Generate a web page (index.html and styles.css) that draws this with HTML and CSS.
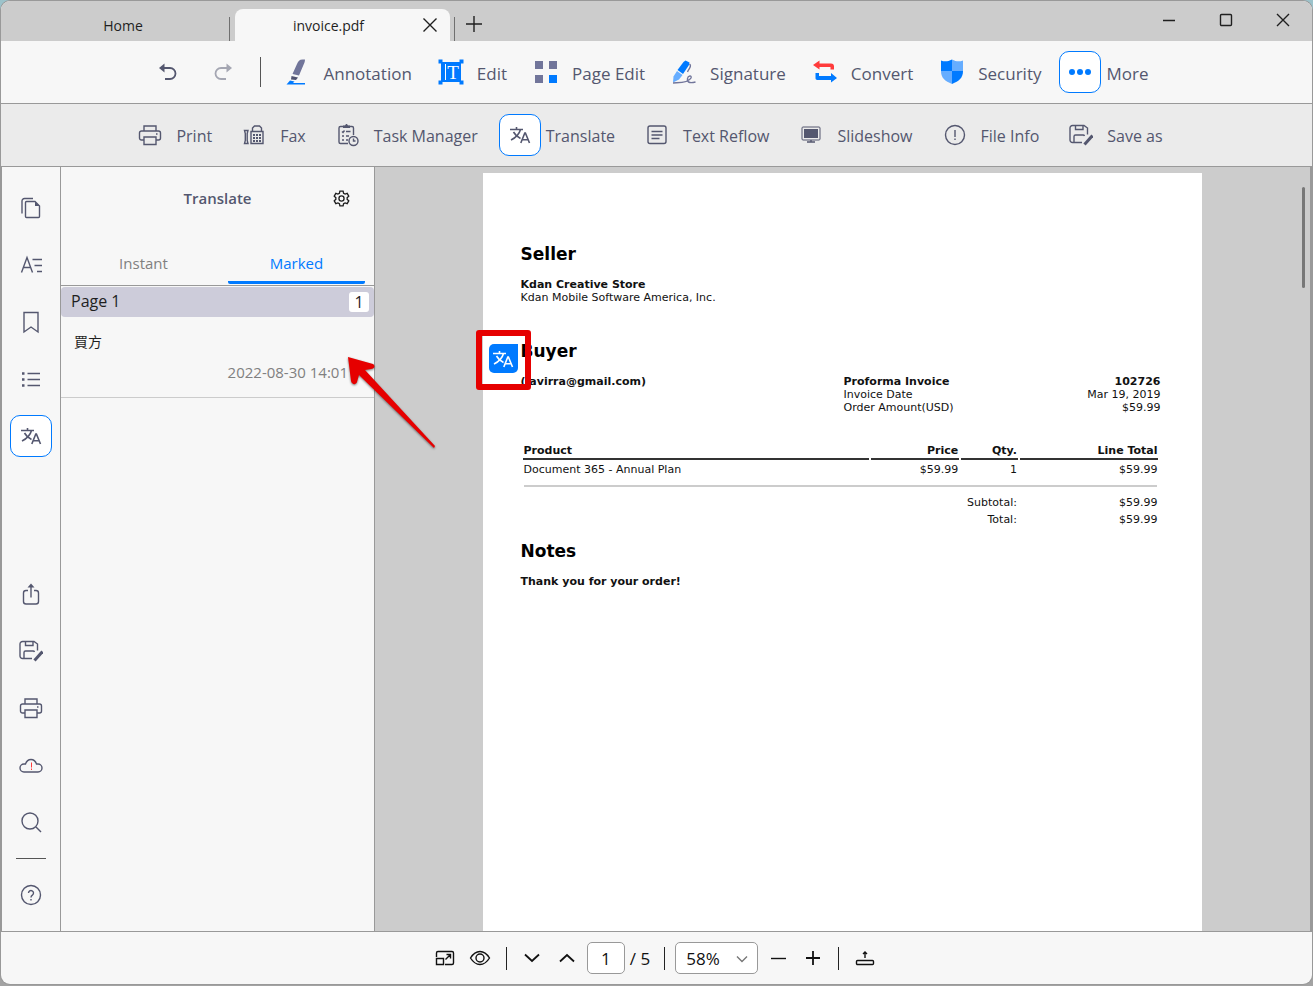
FILE: index.html
```html
<!DOCTYPE html>
<html lang="en">
<head>
    <meta charset="UTF-8">
    <meta name="viewport" content="width=device-width, initial-scale=1.0">
    <title>invoice.pdf</title>
    <link rel="stylesheet" href="styles.css">
</head>
<body>
    <!-- shared icons -->
    <svg class="icon-defs" aria-hidden="true">
        <symbol id="icon-translate" viewBox="0 0 24 24">
            <path stroke-width="1.600" d="M2 6.500h13M8.500 4v2.500M12.500 6.500c-1.200 4.500-4.500 8-9.500 10.500M5.500 9c1.500 2.800 4 5 7 6.500"/>
            <path stroke-width="1.600" d="M12.800 20l4-10h.6L21.500 20M14.200 16.800h6"/>
        </symbol>
        <symbol id="icon-print" viewBox="0 0 24 24">
            <path d="M6 8V3h12v5M6 17H3.500a2 2 0 0 1-2-2v-5a2 2 0 0 1 2-2h17a2 2 0 0 1 2 2v5a2 2 0 0 1-2 2H18M6 14h12v7.500H6zM18 11h1.500"/>
        </symbol>
        <symbol id="icon-save" viewBox="0 0 24 24">
            <path d="M13 19.500H3.500a2.500 2.500 0 0 1-2.500-2.500V5a2.500 2.500 0 0 1 2.500-2.500h11.500L18.500 5v6.500M6.500 2.500v4h7.500v-4M5 19.500v-6a1.500 1.500 0 0 1 1.500-1.500h7.500a1.500 1.500 0 0 1 1.500 1"/>
            <path d="M15.500 21.500l8-9" stroke-width="3"/>
        </symbol>
    </svg>

    <div class="window">
        <header class="tab-bar">
            <button class="doc-tab">Home</button>
            <span class="tab-separator"></span>
            <div class="doc-tab active">
                <button class="tab-name">invoice.pdf</button>
                <button class="tab-close" aria-label="Close tab">
                    <svg width="16" height="16" viewBox="0 0 16 16"><path d="M1.500 1.500l13 13M14.500 1.500l-13 13"/></svg>
                </button>
            </div>
            <span class="tab-separator"></span>
            <button class="tab-add" aria-label="New tab">
                <svg width="18" height="18" viewBox="0 0 18 18"><path d="M9 1v16M1 9h16"/></svg>
            </button>
            <div class="window-controls">
                <button class="window-button" aria-label="Minimize">
                    <svg width="14" height="14" viewBox="0 0 14 14"><path d="M1 7.500h12"/></svg>
                </button>
                <button class="window-button" aria-label="Maximize">
                    <svg width="14" height="14" viewBox="0 0 14 14"><rect x="1.500" y="1.500" width="11" height="11" rx="1"/></svg>
                </button>
                <button class="window-button" aria-label="Close">
                    <svg width="14" height="14" viewBox="0 0 14 14"><path d="M1 1l12 12M13 1L1 13"/></svg>
                </button>
            </div>
        </header>

        <nav class="toolbar">
            <button class="icon-button" aria-label="Undo">
                <svg class="icon" viewBox="0 0 24 24"><path d="M7 8h8a5 5 0 0 1 0 11H10" stroke-width="1.800"/><path class="solid" d="M9.500 3.500L4 8l5.500 4.500z"/></svg>
            </button>
            <button class="icon-button" aria-label="Redo" disabled>
                <svg class="icon" viewBox="0 0 24 24"><path d="M17 8H9a5 5 0 0 0 0 11h5" stroke-width="1.800"/><path class="solid" d="M14.500 3.500L20 8l-5.500 4.500z"/></svg>
            </button>
            <span class="toolbar-divider"></span>
            <button class="tool">
                <span class="tool-icon">
                    <svg class="icon-lg" viewBox="0 0 26 26"><path fill="#71759a" d="M21 0.500h-2.500c-3 0-4.500 2-5.500 4.500L8.500 15l6.500 1.500L20.500 3.500c.3-1 .5-2 .5-3z"/><path fill="#4f5270" d="M7.500 17l6.500 1.500-2 2.500-5-.5z"/><path fill="#007aff" d="M6 21.500l4.500 1L9 24h12v1.500H2.500z"/></svg>
                </span>
                <span class="tool-label">Annotation</span>
            </button>
            <button class="tool">
                <span class="tool-icon">
                    <svg class="icon-lg" viewBox="0 0 26 26"><g fill="#007aff"><path d="M3 3h20v20H3z"/><path d="M.5.5h4v4h-4zM21.500.5h4v4h-4zM.5 21.500h4v4h-4zM21.500 21.500h4v4h-4z"/></g><path fill="#fff" d="M7 5h1v16H7z"/><text class="edit-letter" x="15" y="20" text-anchor="middle">T</text></svg>
                </span>
                <span class="tool-label">Edit</span>
            </button>
            <button class="tool">
                <span class="tool-icon">
                    <svg class="icon-lg" viewBox="0 0 26 26"><path fill="#71759a" d="M2 2h8v8H2zM16 2h8v8h-8zM2 16h8v8H2z"/><path fill="#007aff" d="M16 16h8v8h-8z"/></svg>
                </span>
                <span class="tool-label">Page Edit</span>
            </button>
            <button class="tool">
                <span class="tool-icon">
                    <svg class="icon-lg" viewBox="0 0 26 26"><path fill="#007aff" d="M12.500 3l2-1.500 4 2-.5 2.500-6 9-5.500-4z"/><path fill="#66adff" d="M6 12l5.500 4-3.500 4.500-6 3 .5-6z"/><path fill="none" stroke="#71759a" stroke-width="1.400" d="M18.500 5c3 2-1 5-2 8M2 24c5-.5 15 .5 18-5 1-3-3-2.500-3.500.5-.5 5 4 4.500 8 3.500"/></svg>
                </span>
                <span class="tool-label">Signature</span>
            </button>
            <button class="tool">
                <span class="tool-icon">
                    <svg class="icon-lg" viewBox="0 0 26 26"><path fill="#ff3b3b" d="M7.500 1.500v3H19c2 0 3 1 3 3v3h-3.500V8h-11v2.500L1 6z"/><path fill="#007aff" d="M3.500 14H7v3h12v-3l6 5-6 4.500V21H5.500c-1.500 0-2-1-2-2z"/></svg>
                </span>
                <span class="tool-label">Convert</span>
            </button>
            <button class="tool">
                <span class="tool-icon">
                    <svg class="icon-lg" viewBox="0 0 26 26"><path fill="#007aff" d="M2 1.500c4 1.500 7 1 11-1V12H2z"/><path fill="#66adff" d="M13 .5c4 2 7 2.500 11 1V12H13zM2 12h11v13C6 22 2 19 2 12z"/><path fill="#007aff" d="M13 12h11c0 7-4 10-11 13z"/></svg>
                </span>
                <span class="tool-label">Security</span>
            </button>
            <button class="tool">
                <span class="tool-icon selected">
                    <svg class="icon-lg" viewBox="0 0 26 26"><g fill="#007aff"><circle cx="5" cy="13" r="3"/><circle cx="13" cy="13" r="3"/><circle cx="21" cy="13" r="3"/></g></svg>
                </span>
                <span class="tool-label">More</span>
            </button>
        </nav>

        <nav class="toolbar sub-toolbar">
            <button class="tool">
                <span class="tool-icon"><svg class="icon" viewBox="0 0 24 24"><use href="#icon-print"/></svg></span>
                <span class="tool-label">Print</span>
            </button>
            <button class="tool">
                <span class="tool-icon">
                    <svg class="icon" viewBox="0 0 24 24"><path d="M9 20.500V8.500h12v12zM10.500 8.500V5l2-2h5l2 2v3.500M2.500 7.500h3.500l-.8 3v7l.8 3H2.500l.8-3v-7z"/><path stroke-width="2" stroke-dasharray="2 1" d="M11 12h8M11 15h8M11 18h8"/></svg>
                </span>
                <span class="tool-label">Fax</span>
            </button>
            <button class="tool">
                <span class="tool-icon">
                    <svg class="icon" viewBox="0 0 24 24"><path d="M12 20.500H4.500a1.500 1.500 0 0 1-1.500-1.500V5a1.500 1.500 0 0 1 1.500-1.500h11.500a1.500 1.500 0 0 1 1.500 1.500v7M6 8.500l1 1 1.500-2M6 13h2M6 17h2M10 8.500h4.500M10 13h3M10 17h2M17.500 15.500v2.500h2"/><circle cx="17.500" cy="18" r="4.500"/><path class="solid" d="M7 2.500h2l1-1.500h1l1 1.500h2v2.500H7z"/></svg>
                </span>
                <span class="tool-label">Task Manager</span>
            </button>
            <button class="tool">
                <span class="tool-icon selected"><svg class="icon" viewBox="0 0 24 24"><use href="#icon-translate"/></svg></span>
                <span class="tool-label">Translate</span>
            </button>
            <button class="tool">
                <span class="tool-icon">
                    <svg class="icon" viewBox="0 0 24 24"><rect x="3" y="3" width="18" height="17.500" rx="2"/><path d="M6.500 8.500h11M6.500 12h11M6.500 15.500h8"/></svg>
                </span>
                <span class="tool-label">Text Reflow</span>
            </button>
            <button class="tool">
                <span class="tool-icon">
                    <svg class="icon" viewBox="0 0 24 24"><rect x="3" y="4" width="18" height="13" rx="1" stroke-width="1"/><path class="solid" d="M5 6h14v9H5z"/><path d="M12 17v2M8 19h8"/></svg>
                </span>
                <span class="tool-label">Slideshow</span>
            </button>
            <button class="tool">
                <span class="tool-icon">
                    <svg class="icon" viewBox="0 0 24 24"><circle cx="12" cy="12" r="9.500"/><path d="M12 7v7M12 15.500v1.500"/></svg>
                </span>
                <span class="tool-label">File Info</span>
            </button>
            <button class="tool">
                <span class="tool-icon"><svg class="icon" viewBox="0 0 24 24"><use href="#icon-save"/></svg></span>
                <span class="tool-label">Save as</span>
            </button>
        </nav>

        <main class="workspace">
            <nav class="side-rail">
                <button class="rail-button" aria-label="Thumbnails">
                    <svg class="icon" viewBox="0 0 24 24"><path d="M3 17.500V5a2.500 2.500 0 0 1 2.500-2.500H14M7.500 5.500H16l4.500 4.500v10.500a1 1 0 0 1-1 1h-12a1 1 0 0 1-1-1v-14a1 1 0 0 1 1-1z"/><path class="solid" d="M16 5.500l4.500 4.500H16z"/></svg>
                </button>
                <button class="rail-button" aria-label="Outline">
                    <svg class="icon" viewBox="0 0 24 24"><path d="M2.500 19.500L8 4.500l5.500 15M4.500 14.500h7M13.500 6.500h9.500M15.500 12.500h7.500M18 18.500h5"/></svg>
                </button>
                <button class="rail-button" aria-label="Bookmarks">
                    <svg class="icon" viewBox="0 0 24 24"><path d="M5 2.500h14v19.500l-7-5-7 5z"/></svg>
                </button>
                <button class="rail-button" aria-label="List">
                    <svg class="icon" viewBox="0 0 24 24"><path d="M8.500 6.500H21M8.500 12.500H21M8.500 18.500H21"/><path stroke-width="2.500" d="M3 6.500h2.500M3 12.500h2.500M3 18.500h2.500"/></svg>
                </button>
                <button class="rail-button selected" aria-label="Translate">
                    <svg class="icon" viewBox="0 0 24 24"><use href="#icon-translate"/></svg>
                </button>
                <span class="rail-spacer"></span>
                <button class="rail-button" aria-label="Share">
                    <svg class="icon" viewBox="0 0 24 24"><path d="M9 8.500H7A2.500 2.500 0 0 0 4.500 11v8.500A2.500 2.500 0 0 0 7 22h10a2.500 2.500 0 0 0 2.500-2.500V11A2.500 2.500 0 0 0 17 8.500h-2M12 15.500V4"/><path class="solid" d="M12 1.500l3.500 4h-7z"/></svg>
                </button>
                <button class="rail-button" aria-label="Save as">
                    <svg class="icon" viewBox="0 0 24 24"><use href="#icon-save"/></svg>
                </button>
                <button class="rail-button" aria-label="Print">
                    <svg class="icon" viewBox="0 0 24 24"><use href="#icon-print"/></svg>
                </button>
                <button class="rail-button" aria-label="Cloud">
                    <svg class="icon" viewBox="0 0 24 24"><path d="M5 19a4 4 0 0 1 0-8h1.500c1-3 3-4.500 5.500-4.500s4.500 1.500 5.500 4.500H19a4 4 0 0 1 0 8z"/><path stroke="#ff3b3b" stroke-width="1" d="M12.500 9.500v5M12.500 15.500v1.500"/></svg>
                </button>
                <button class="rail-button" aria-label="Search">
                    <svg class="icon" viewBox="0 0 24 24"><circle cx="11" cy="11" r="8"/><path d="M17 17l5 5"/></svg>
                </button>
                <span class="rail-divider"></span>
                <button class="rail-button" aria-label="Help">
                    <svg class="icon" viewBox="0 0 24 24"><circle cx="12" cy="12" r="9.500"/><path d="M9.500 10a2.500 2.500 0 1 1 4 2c-1 .7-1.500 1-1.500 2.500M12 16v1.500"/></svg>
                </button>
            </nav>

            <aside class="panel">
                <div class="panel-header">
                    <h2 class="panel-title">Translate</h2>
                    <button class="panel-settings" aria-label="Settings">
                        <svg width="17" height="17" viewBox="0 0 18 18"><path d="M7.300 1.200h3.400l.5 2.200 1.600.9 2.200-.7 1.700 3-1.700 1.500v1.800l1.700 1.500-1.700 3-2.200-.7-1.600.9-.5 2.200H7.300l-.5-2.200-1.600-.9-2.200.7-1.700-3L3 9.900V8.100L1.300 6.600l1.700-3 2.200.7 1.600-.9z"/><circle cx="9" cy="9" r="2.700"/></svg>
                    </button>
                </div>
                <div class="panel-tabs">
                    <button class="panel-tab">Instant</button>
                    <button class="panel-tab active">Marked</button>
                </div>
                <div class="page-group">
                    <span class="page-name">Page 1</span>
                    <span class="page-count">1</span>
                </div>
                <div class="mark-item">
                    <p class="mark-text" lang="zh-TW">買方</p>
                    <p class="mark-date">2022-08-30 14:01</p>
                </div>
            </aside>

            <section class="viewer">
                <article class="page">
                    <h3>Seller</h3>
                    <p><strong>Kdan Creative Store</strong><br>Kdan Mobile Software America, Inc.</p>
                    <h3 class="buyer-title">Buyer</h3>
                    <div class="buyer-row">
                        <p><strong>(javirra@gmail.com)</strong></p>
                        <dl class="invoice-info">
                            <dt class="strong">Proforma Invoice</dt><dd class="strong">102726</dd>
                            <dt>Invoice Date</dt><dd>Mar 19, 2019</dd>
                            <dt>Order Amount(USD)</dt><dd>$59.99</dd>
                        </dl>
                    </div>
                    <table class="items">
                        <colgroup>
                            <col class="col-product"><col class="col-price"><col class="col-qty"><col class="col-total">
                        </colgroup>
                        <thead>
                            <tr><th>Product</th><th>Price</th><th>Qty.</th><th>Line Total</th></tr>
                        </thead>
                        <tbody>
                            <tr><td>Document 365 - Annual Plan</td><td>$59.99</td><td>1</td><td>$59.99</td></tr>
                            <tr class="rule"><td colspan="4"><hr></td></tr>
                            <tr><td colspan="3">Subtotal:</td><td>$59.99</td></tr>
                            <tr><td colspan="3">Total:</td><td>$59.99</td></tr>
                        </tbody>
                    </table>
                    <h3>Notes</h3>
                    <p><strong>Thank you for your order!</strong></p>
                    <div class="highlight">
                        <button class="marker" aria-label="Open translation">
                            <svg class="icon" viewBox="0 0 24 24"><use href="#icon-translate"/></svg>
                        </button>
                    </div>
                </article>
                <span class="scroll-thumb"></span>
            </section>

            <svg class="arrow" width="90" height="94" viewBox="0 0 90 94">
                <path d="M1 1l25 7c3 2 1 5-2 5l-6 1L88 90l-1 2L12 19l-2 7c-1 3-5 3-6-1z"/>
            </svg>
        </main>

        <footer class="status-bar">
            <button class="status-button" aria-label="Fit page">
                <svg width="20" height="20" viewBox="0 0 20 20"><path d="M1.500 9V5A1.500 1.500 0 0 1 3 3.500h14A1.500 1.500 0 0 1 18.500 5v10a1.500 1.500 0 0 1-1.500 1.500h-7M1.500 10.500h7v6h-7zM10.500 11.500l5-5M11.500 6.500h4v4"/></svg>
            </button>
            <button class="status-button" aria-label="View mode">
                <svg width="22" height="20" viewBox="0 0 22 20"><path d="M1.500 10C4 6 7 3.500 11 3.500s7 2.500 9.500 6.500c-2.500 4-5.500 6.500-9.500 6.500S4 14 1.500 10z"/><circle cx="11" cy="10" r="4"/></svg>
            </button>
            <span class="status-divider"></span>
            <button class="status-button" aria-label="Next page">
                <svg width="16" height="16" viewBox="0 0 16 16"><path d="M1 4.500l7 6.500 7-6.500" stroke-width="1.800"/></svg>
            </button>
            <button class="status-button" aria-label="Previous page">
                <svg width="16" height="16" viewBox="0 0 16 16"><path d="M1 11.500L8 5l7 6.500" stroke-width="1.800"/></svg>
            </button>
            <label class="page-number"><input type="text" value="1" aria-label="Page number"> / 5</label>
            <span class="status-divider"></span>
            <div class="zoom-box">
                <select aria-label="Zoom">
                    <option>58%</option>
                    <option>100%</option>
                </select>
                <svg width="12" height="12" viewBox="0 0 12 12"><path d="M1 3.500l5 5 5-5"/></svg>
            </div>
            <button class="status-button" aria-label="Zoom out">
                <svg width="16" height="16" viewBox="0 0 16 16"><path d="M1 8.500h15"/></svg>
            </button>
            <button class="status-button" aria-label="Zoom in">
                <svg width="16" height="16" viewBox="0 0 16 16"><path d="M1 8h14M8 1v14" stroke-width="1.800"/></svg>
            </button>
            <span class="status-divider"></span>
            <button class="status-button" aria-label="Expand">
                <svg width="20" height="20" viewBox="0 0 20 20"><rect x="1.500" y="12.500" width="17" height="4" rx="1"/><path d="M10 10V5M8 6l2-2 2 2"/></svg>
            </button>
        </footer>
    </div>
</body>
</html>
```
FILE: styles.css
```css
* {
    margin: 0;
    padding: 0;
    box-sizing: border-box;
}

body {
    height: 100vh;
    padding: 1px 1px 2px;
    background: linear-gradient(90deg, #9cc3cb, #7f9fae 25%, #4468a8 45%, #8fb3ba 60%, #a58ba8 75%, #9cc3cb) top / 100% 12px no-repeat #a3a3a3;
    font-family: "Open Sans", "Noto Sans", "Noto Sans CJK TC", sans-serif;
    color: #1f1f1f;
    overflow: hidden;
}

button,
input,
select {
    font: inherit;
    color: inherit;
    background: none;
    border: none;
}

button {
    cursor: pointer;
}

svg {
    display: block;
    fill: none;
    stroke: currentColor;
    stroke-width: 1.4;
}

.icon-defs {
    position: absolute;
    width: 0;
    height: 0;
}

.icon {
    width: 24px;
    height: 24px;
}

.icon .solid {
    fill: currentColor;
    stroke: none;
}

.icon-lg {
    width: 26px;
    height: 26px;
    stroke: none;
}

.edit-letter {
    font-family: "Liberation Serif", serif;
    font-size: 19px;
    fill: #fff;
}

.window {
    height: 100%;
    display: flex;
    flex-direction: column;
    background-color: #f7f7f7;
    border-radius: 9px;
    overflow: hidden;
    box-shadow: 0 0 0 1px #999;
}

/* tabs */
.tab-bar {
    height: 40px;
    flex: none;
    display: flex;
    align-items: flex-end;
    padding-right: 1px;
    background-color: #ccc;
    font-size: 14px;
}

.doc-tab {
    width: 215px;
    height: 32px;
    margin-left: 5px;
    margin-right: 4px;
    display: flex;
    align-items: center;
    justify-content: center;
}

.doc-tab:first-child {
    margin-left: 14px;
    margin-right: 0;
    padding-left: 2px;
    width: 214px;
}

.doc-tab.active {
    background-color: #f7f7f7;
    border-radius: 8px 8px 0 0;
    padding-right: 12px;
}

.tab-name {
    flex: 1;
}

.tab-separator {
    width: 1px;
    height: 24px;
    background-color: #707070;
}

.tab-add {
    width: 38px;
    height: 34px;
    display: flex;
    align-items: center;
    justify-content: center;
}

.window-controls {
    margin-left: auto;
    align-self: flex-start;
    display: flex;
}

.window-button {
    width: 57px;
    height: 38px;
    display: flex;
    align-items: center;
    justify-content: center;
}

/* toolbars */
.toolbar {
    height: 63px;
    flex: none;
    display: flex;
    align-items: center;
    justify-content: center;
    border-bottom: 1px solid #999;
    color: #54576f;
    font-size: 17px;
}

.sub-toolbar {
    background-color: #ebebeb;
    font-size: 16px;
}

.icon-button {
    width: 42px;
    height: 42px;
    margin-right: 15px;
    display: flex;
    align-items: center;
    justify-content: center;
}

.icon-button:disabled {
    opacity: 0.5;
}

.toolbar-divider {
    width: 1px;
    height: 30px;
    background-color: #555;
    margin-right: 15px;
}

.tool {
    display: flex;
    align-items: center;
    gap: 5px;
    margin-right: 18px;
    white-space: nowrap;
}

.sub-toolbar .tool {
    margin-right: 21px;
}

.tool-label {
    padding-top: 2px;
}

.tool-icon,
.rail-button {
    width: 42px;
    height: 42px;
    flex: none;
    display: flex;
    align-items: center;
    justify-content: center;
    border: 1px solid transparent;
    border-radius: 10px;
}

.tool-icon.selected,
.rail-button.selected {
    background-color: #fff;
    border-color: #007aff;
}

/* main area */
.workspace {
    flex: 1;
    min-height: 0;
    display: flex;
    position: relative;
    border-right: 2px solid #999;
    border-bottom: 1px solid #999;
}

.side-rail {
    width: 60px;
    flex: none;
    display: flex;
    flex-direction: column;
    align-items: center;
    gap: 15px;
    padding: 20px 0 15px;
    border-left: 1px solid #999;
    border-right: 1px solid #999;
    color: #54576f;
}

.rail-spacer {
    flex: 1;
}

.rail-divider {
    width: 30px;
    height: 1px;
    background-color: #555;
}

.panel {
    width: 314px;
    flex: none;
    border-right: 1px solid #999;
}

.panel-header {
    height: 62px;
    display: flex;
    align-items: center;
    padding: 0 23px 0 43px;
}

.panel-title {
    flex: 1;
    text-align: center;
    font-size: 15px;
    font-weight: 600;
    color: #54576f;
}

.panel-settings {
    width: 20px;
    height: 20px;
    display: flex;
    align-items: center;
    justify-content: center;
}

.panel-tabs {
    height: 57px;
    display: flex;
    gap: 16px;
    padding: 15px 9px 1px 14px;
    border-bottom: 1px solid #999;
    margin-bottom: 1px;
}

.panel-tab {
    flex: 1;
    font-size: 15px;
    color: #808080;
    border-bottom: 3px solid transparent;
    border-radius: 2px;
}

.panel-tab.active {
    color: #007aff;
    border-color: #007aff;
}

.page-group {
    height: 30px;
    display: flex;
    align-items: center;
    justify-content: space-between;
    padding: 0 5px 0 10px;
    background-color: #cdccda;
    border-radius: 4px;
    font-size: 16px;
}

.page-name {
    padding-bottom: 2px;
}

.page-count {
    width: 20px;
    height: 20px;
    line-height: 20px;
    text-align: center;
    background-color: #fff;
    border-radius: 3px;
}

.mark-item {
    padding: 15px 26px 15px 13px;
    border-bottom: 1px solid #ccc;
}

.mark-text {
    font-size: 14px;
    line-height: 20px;
}

.mark-date {
    margin-top: 10px;
    text-align: right;
    font-size: 15px;
    line-height: 20px;
    color: #808080;
}

.viewer {
    flex: 1;
    position: relative;
    display: flex;
    justify-content: center;
    padding-top: 6px;
    background-color: #ccc;
}

.page {
    width: 77%;
    position: relative;
    padding: 71px 42px 0 38px;
    background-color: #fff;
    font-family: "DejaVu Sans", sans-serif;
    font-size: 11px;
    line-height: 13px;
    color: #111;
}

.page h3 {
    font-size: 17px;
    line-height: 20px;
    margin-bottom: 14px;
    color: #000;
}

.page .buyer-title {
    margin-top: 37px;
}

.buyer-row {
    display: grid;
    grid-template-columns: 1fr 1fr;
    column-gap: 6px;
}

.invoice-info {
    display: grid;
    grid-template-columns: auto auto;
}

.invoice-info dd {
    text-align: right;
}

.strong {
    font-weight: bold;
}

.items {
    width: 100%;
    table-layout: fixed;
    margin: 27px 0 12px;
    border-spacing: 2px;
}

.col-price {
    width: 14%;
}

.col-qty {
    width: 9%;
}

.col-total {
    width: 22%;
}

.items th,
.items td {
    text-align: right;
    padding: 1px;
}

.items th {
    border-bottom: 2px solid #333;
}

.items th:first-child,
.items tr:first-child td:first-child {
    text-align: left;
}

.items .rule hr {
    margin: 5px 0;
    border: none;
    border-top: 2px solid #ccc;
}

.highlight {
    position: absolute;
    left: -7px;
    top: 157px;
    width: 55px;
    height: 60px;
    padding: 8px 7px;
    border: 6px solid #e60000;
    border-radius: 3px;
}

.marker {
    width: 29px;
    height: 29px;
    display: flex;
    align-items: center;
    justify-content: center;
    color: #fff;
    background-color: #007aff;
    border-radius: 5px 0 5px 5px;
}

.scroll-thumb {
    position: absolute;
    right: 5px;
    top: 20px;
    width: 3px;
    height: 101px;
    border-radius: 2px;
    background-color: #777;
}

.arrow {
    position: absolute;
    left: 346px;
    top: 189px;
    fill: #e60000;
    stroke: none;
    filter: drop-shadow(0 1px 1px rgba(0, 0, 0, 0.5));
}

/* bottom bar */
.status-bar {
    height: 52px;
    flex: none;
    display: flex;
    align-items: center;
    justify-content: center;
    padding-right: 3px;
    color: #111;
    font-size: 17px;
}

.status-button {
    width: 35px;
    height: 35px;
    display: flex;
    align-items: center;
    justify-content: center;
}

.status-divider {
    width: 1px;
    height: 23px;
    margin: 0 8px;
    background-color: #222;
}

.page-number {
    display: flex;
    align-items: center;
    gap: 5px;
    margin-right: 6px;
}

.page-number input {
    width: 38px;
    height: 32px;
    margin-left: 2px;
    text-align: center;
    background-color: #fff;
    border: 1px solid #999;
    border-radius: 5px;
}

.zoom-box {
    position: relative;
    margin: 0 2px;
}

.zoom-box select {
    width: 83px;
    height: 32px;
    padding-left: 10px;
    appearance: none;
    background-color: #fff;
    border: 1px solid #999;
    border-radius: 5px;
}

.zoom-box svg {
    position: absolute;
    right: 10px;
    top: 11px;
    color: #777;
    pointer-events: none;
}
```
